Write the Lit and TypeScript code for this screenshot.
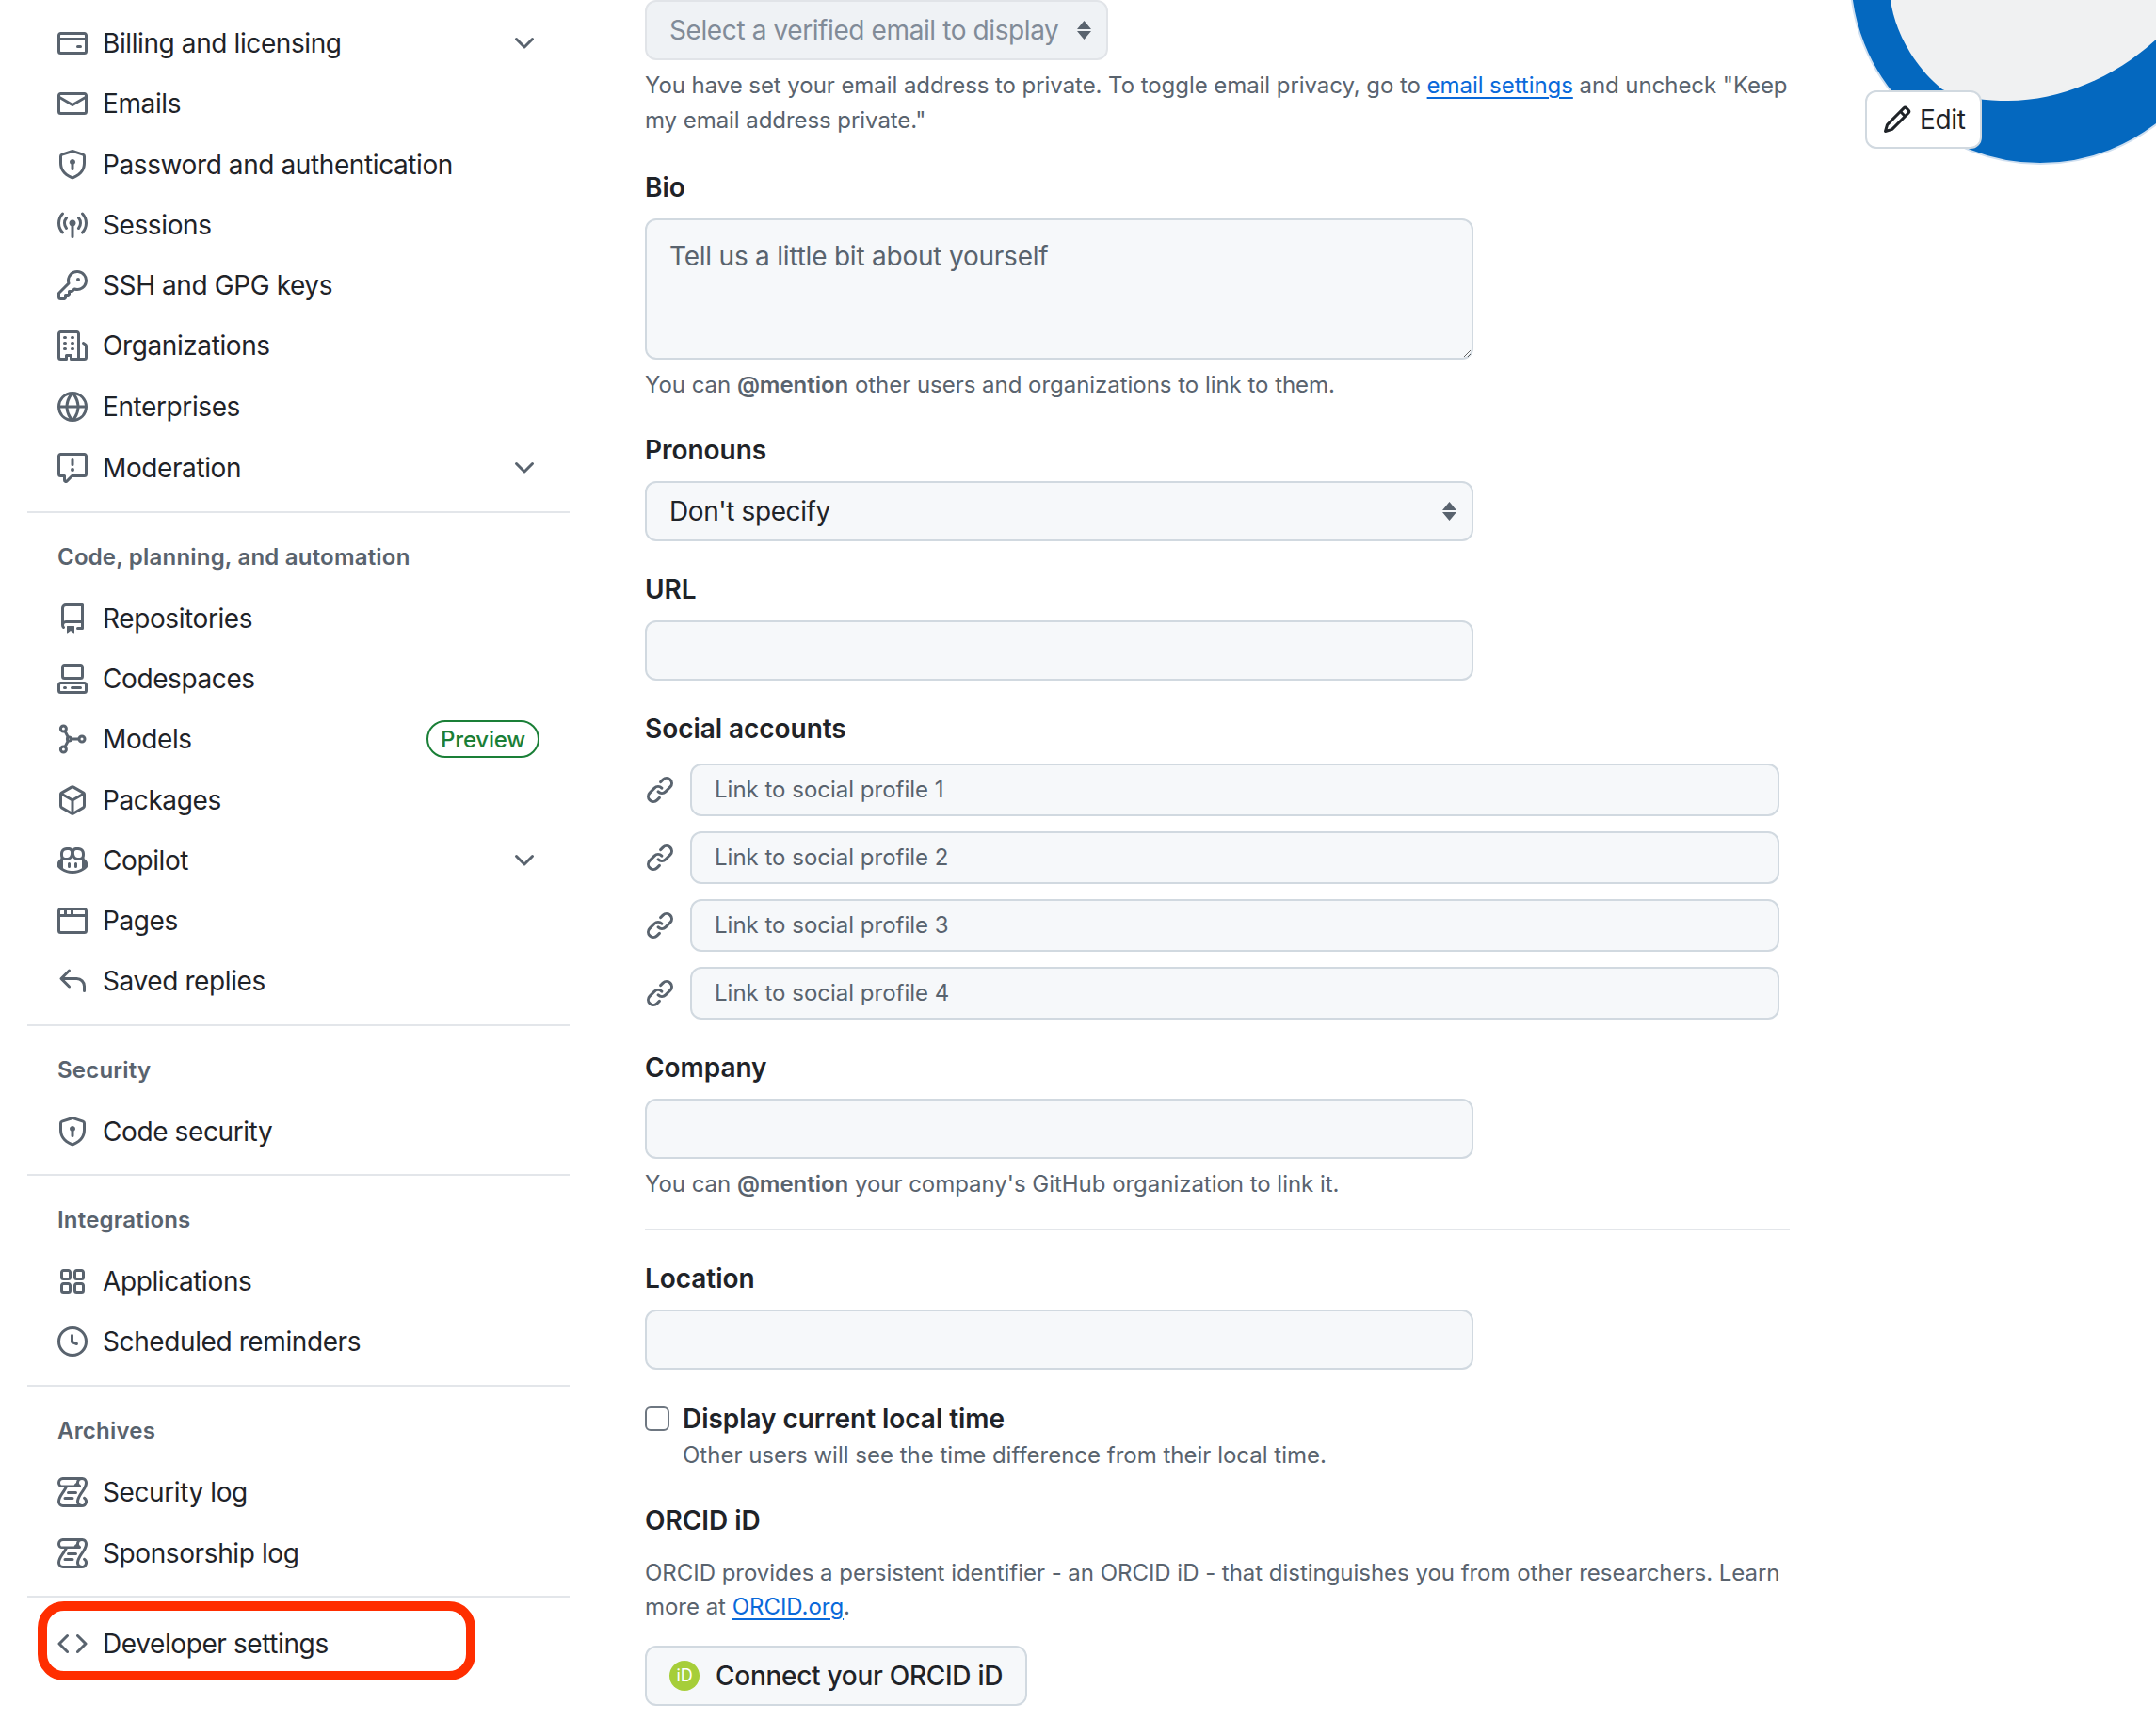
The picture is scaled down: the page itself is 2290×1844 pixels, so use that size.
import { html, LitElement, css } from 'lit';
import { customElement } from 'lit/decorators.js';

const icons: Record<string, string> = {
  card: 'M10.75 9a.75.75 0 0 0 0 1.5h1.5a.75.75 0 0 0 0-1.5h-1.5ZM0 3.75C0 2.784.784 2 1.75 2h12.5c.966 0 1.75.784 1.75 1.75v8.5A1.75 1.75 0 0 1 14.25 14H1.75A1.75 1.75 0 0 1 0 12.25ZM14.5 6.5h-13v5.75c0 .138.112.25.25.25h12.5a.25.25 0 0 0 .25-.25Zm0-2.75a.25.25 0 0 0-.25-.25H1.75a.25.25 0 0 0-.25.25V5h13Z',
  mail: 'M1.75 2h12.5c.966 0 1.75.784 1.75 1.75v8.5A1.75 1.75 0 0 1 14.25 14H1.75A1.75 1.75 0 0 1 0 12.25v-8.5C0 2.784.784 2 1.75 2ZM1.5 12.251c0 .138.112.25.25.25h12.5a.25.25 0 0 0 .25-.25V5.809L8.38 9.397a.75.75 0 0 1-.76 0L1.5 5.809v6.442Zm13-8.181v-.32a.25.25 0 0 0-.25-.25H1.75a.25.25 0 0 0-.25.25v.32L8 7.88Z',
  shield: 'm8.533.133 5.25 1.68A1.75 1.75 0 0 1 15 3.48V7c0 1.566-.32 3.182-1.303 4.682-.983 1.498-2.585 2.813-5.032 3.855a1.697 1.697 0 0 1-1.33 0c-2.447-1.042-4.049-2.357-5.032-3.855C1.32 10.182 1 8.566 1 7V3.48a1.75 1.75 0 0 1 1.217-1.667l5.25-1.68a1.748 1.748 0 0 1 1.066 0Zm-.61 1.429.001.001-5.25 1.68a.251.251 0 0 0-.174.237V7c0 1.36.275 2.666 1.057 3.859.784 1.194 2.121 2.342 4.366 3.298a.196.196 0 0 0 .154 0c2.245-.957 3.582-2.103 4.366-3.297C13.225 9.666 13.5 8.358 13.5 7V3.48a.25.25 0 0 0-.174-.238l-5.25-1.68a.25.25 0 0 0-.153 0ZM9.5 6.5c0 .536-.286 1.032-.75 1.3v2.45a.75.75 0 0 1-1.5 0V7.8A1.5 1.5 0 1 1 9.5 6.5Z',
  broadcast: 'M8.75 8.582v5.668a.75.75 0 0 1-1.5 0V8.582a1.75 1.75 0 1 1 1.5 0Zm3.983-7.125a.75.75 0 0 1 1.06.026A7.976 7.976 0 0 1 16 7c0 2.139-.84 4.083-2.207 5.517a.75.75 0 1 1-1.086-1.034A6.474 6.474 0 0 0 14.5 7a6.474 6.474 0 0 0-1.793-4.483.75.75 0 0 1 .026-1.06Zm-9.466 0a.75.75 0 0 1 .026 1.06A6.474 6.474 0 0 0 1.5 7a6.47 6.47 0 0 0 1.793 4.483.75.75 0 0 1-1.086 1.034A7.973 7.973 0 0 1 0 7c0-2.139.84-4.083 2.207-5.517a.75.75 0 0 1 1.06-.026Zm8.556 2.321A4.988 4.988 0 0 1 13 7a4.988 4.988 0 0 1-1.177 3.222.75.75 0 1 1-1.146-.967A3.487 3.487 0 0 0 11.5 7c0-.86-.309-1.645-.823-2.255a.75.75 0 0 1 1.146-.967Zm-6.492.958A3.48 3.48 0 0 0 4.5 7a3.48 3.48 0 0 0 .823 2.255.75.75 0 0 1-1.146.967A4.981 4.981 0 0 1 3 7a4.982 4.982 0 0 1 1.188-3.236.75.75 0 1 1 1.143.972Z',
  key: 'M10.5 0a5.499 5.499 0 1 1-1.288 10.848l-.932.932a.749.749 0 0 1-.53.22H7v.75a.749.749 0 0 1-.22.53l-.5.5a.749.749 0 0 1-.53.22H5v.75a.749.749 0 0 1-.22.53l-.5.5a.749.749 0 0 1-.53.22h-2A1.75 1.75 0 0 1 0 14.25v-2c0-.199.079-.389.22-.53l4.932-4.932A5.5 5.5 0 0 1 10.5 0Zm-4 5.5c-.001.431.069.86.205 1.269a.75.75 0 0 1-.181.768L1.5 12.56v1.69c0 .138.112.25.25.25h1.69l.06-.06v-1.19a.75.75 0 0 1 .75-.75h1.19l.06-.06v-1.19a.75.75 0 0 1 .75-.75h1.19l1.023-1.025a.75.75 0 0 1 .768-.18A4 4 0 1 0 6.5 5.5ZM11 6a1 1 0 1 1 0-2 1 1 0 0 1 0 2Z',
  org: 'M1.75 16A1.75 1.75 0 0 1 0 14.25V1.75C0 .784.784 0 1.75 0h8.5C11.216 0 12 .784 12 1.75v12.5c0 .085-.006.168-.018.25h2.268a.25.25 0 0 0 .25-.25V8.285a.25.25 0 0 0-.111-.208l-1.055-.703a.749.749 0 1 1 .832-1.248l1.055.703c.487.325.779.871.779 1.456v5.965A1.75 1.75 0 0 1 14.25 16h-3.5a.766.766 0 0 1-.197-.026c-.099.017-.2.026-.303.026h-3a.75.75 0 0 1-.75-.75V14h-1v1.25a.75.75 0 0 1-.75.75Zm-.25-1.75c0 .138.112.25.25.25H4v-1.25a.75.75 0 0 1 .75-.75h2.5a.75.75 0 0 1 .75.75v1.25h2.25a.25.25 0 0 0 .25-.25V1.75a.25.25 0 0 0-.25-.25h-8.5a.25.25 0 0 0-.25.25ZM3.75 6h.5a.75.75 0 0 1 0 1.5h-.5a.75.75 0 0 1 0-1.5ZM3 3.75A.75.75 0 0 1 3.75 3h.5a.75.75 0 0 1 0 1.5h-.5A.75.75 0 0 1 3 3.75Zm4 3A.75.75 0 0 1 7.75 6h.5a.75.75 0 0 1 0 1.5h-.5A.75.75 0 0 1 7 6.75ZM7.75 3h.5a.75.75 0 0 1 0 1.5h-.5a.75.75 0 0 1 0-1.5ZM3 9.75A.75.75 0 0 1 3.75 9h.5a.75.75 0 0 1 0 1.5h-.5A.75.75 0 0 1 3 9.75ZM7.75 9h.5a.75.75 0 0 1 0 1.5h-.5a.75.75 0 0 1 0-1.5Z',
  globe: 'M8 0a8 8 0 1 1 0 16A8 8 0 0 1 8 0ZM5.78 8.75a9.64 9.64 0 0 0 1.363 4.177c.255.426.542.832.857 1.215.245-.296.551-.705.857-1.215A9.64 9.64 0 0 0 10.22 8.75Zm4.44-1.5a9.64 9.64 0 0 0-1.363-4.177c-.307-.51-.612-.919-.857-1.215a9.927 9.927 0 0 0-.857 1.215A9.64 9.64 0 0 0 5.78 7.25Zm-5.944 1.5H1.543a6.507 6.507 0 0 0 4.666 5.5c-.123-.181-.24-.365-.352-.552-.715-1.192-1.437-2.874-1.581-4.948Zm-2.733-1.5h2.733c.144-2.074.866-3.756 1.58-4.948.12-.197.237-.381.353-.552a6.507 6.507 0 0 0-4.666 5.5Zm10.181 1.5c-.144 2.074-.866 3.756-1.58 4.948-.12.197-.237.381-.353.552a6.507 6.507 0 0 0 4.666-5.5Zm2.733-1.5a6.507 6.507 0 0 0-4.666-5.5c.123.181.24.365.353.552.714 1.192 1.436 2.874 1.58 4.948Z',
  report: 'M0 1.75C0 .784.784 0 1.75 0h12.5C15.216 0 16 .784 16 1.75v9.5A1.75 1.75 0 0 1 14.25 13H8.06l-2.573 2.573A1.458 1.458 0 0 1 3 14.543V13H1.75A1.75 1.75 0 0 1 0 11.25Zm1.75-.25a.25.25 0 0 0-.25.25v9.5c0 .138.112.25.25.25h2a.75.75 0 0 1 .75.75v2.19l2.72-2.72a.749.749 0 0 1 .53-.22h6.5a.25.25 0 0 0 .25-.25v-9.5a.25.25 0 0 0-.25-.25Zm7 2.25v2.5a.75.75 0 0 1-1.5 0v-2.5a.75.75 0 0 1 1.5 0ZM9 9a1 1 0 1 1-2 0 1 1 0 0 1 2 0Z',
  repo: 'M2 2.5A2.5 2.5 0 0 1 4.5 0h8.75a.75.75 0 0 1 .75.75v12.5a.75.75 0 0 1-.75.75h-2.5a.75.75 0 0 1 0-1.5h1.75v-2h-8a1 1 0 0 0-.714 1.7.75.75 0 1 1-1.072 1.05A2.495 2.495 0 0 1 2 11.5Zm10.5-1h-8a1 1 0 0 0-1 1v6.708A2.486 2.486 0 0 1 4.5 9h8ZM5 12.25a.25.25 0 0 1 .25-.25h3.5a.25.25 0 0 1 .25.25v3.25a.25.25 0 0 1-.4.2l-1.45-1.087a.249.249 0 0 0-.3 0L5.4 15.7a.25.25 0 0 1-.4-.2Z',
  codespaces: 'M0 11.25c0-.966.784-1.75 1.75-1.75h12.5c.966 0 1.75.784 1.75 1.75v3A1.75 1.75 0 0 1 14.25 16H1.75A1.75 1.75 0 0 1 0 14.25Zm2-9.5C2 .784 2.784 0 3.75 0h8.5C13.216 0 14 .784 14 1.75v5a1.75 1.75 0 0 1-1.75 1.75h-8.5A1.75 1.75 0 0 1 2 6.75Zm1.75-.25a.25.25 0 0 0-.25.25v5c0 .138.112.25.25.25h8.5a.25.25 0 0 0 .25-.25v-5a.25.25 0 0 0-.25-.25Zm-2 9.5a.25.25 0 0 0-.25.25v3c0 .138.112.25.25.25h12.5a.25.25 0 0 0 .25-.25v-3a.25.25 0 0 0-.25-.25ZM7 12.75a.75.75 0 0 1 .75-.75h4.5a.75.75 0 0 1 0 1.5h-4.5a.75.75 0 0 1-.75-.75Zm-4 0a.75.75 0 0 1 .75-.75h.5a.75.75 0 0 1 0 1.5h-.5a.75.75 0 0 1-.75-.75Z',
  package: 'm8.878.392 5.25 3.045c.54.314.872.89.872 1.514v6.098a1.75 1.75 0 0 1-.872 1.514l-5.25 3.045a1.75 1.75 0 0 1-1.756 0l-5.25-3.045A1.75 1.75 0 0 1 1 11.049V4.951c0-.624.332-1.201.872-1.514L7.122.392a1.75 1.75 0 0 1 1.756 0ZM7.875 1.69l-4.63 2.685L8 7.133l4.755-2.758-4.63-2.685a.248.248 0 0 0-.25 0ZM2.5 5.677v5.372c0 .09.047.171.125.216l4.625 2.683V8.432Zm6.25 8.271 4.625-2.683a.25.25 0 0 0 .125-.216V5.677L8.75 8.432Z',
  copilot: 'M7.998 15.035c-4.562 0-7.873-2.914-7.998-3.749V9.338c.085-.628.677-1.686 1.588-2.065.013-.07.024-.143.036-.218.029-.183.06-.384.126-.612-.201-.508-.254-1.084-.254-1.656 0-.87.128-1.769.693-2.484.579-.733 1.494-1.124 2.724-1.261 1.206-.134 2.262.034 2.944.765.05.053.096.108.139.165.044-.057.094-.112.143-.165.682-.731 1.738-.899 2.944-.765 1.23.137 2.145.528 2.724 1.261.566.715.693 1.614.693 2.484 0 .572-.053 1.148-.254 1.656.066.228.098.429.126.612.012.076.024.148.037.218.924.385 1.522 1.471 1.591 2.095v1.872c0 .766-3.351 3.795-8.002 3.795Zm0-1.485c2.28 0 4.584-1.11 5.002-1.433V7.862l-.023-.116c-.49.21-1.075.291-1.727.291-1.146 0-2.059-.327-2.71-.991A3.222 3.222 0 0 1 8 6.303a3.24 3.24 0 0 1-.544.743c-.65.664-1.563.991-2.71.991-.652 0-1.236-.081-1.727-.291l-.023.116v4.255c.419.323 2.722 1.433 5.002 1.433ZM6.762 2.83c-.193-.206-.637-.413-1.682-.297-1.019.113-1.479.404-1.713.7-.247.312-.369.789-.369 1.554 0 .793.129 1.171.308 1.371.162.181.519.379 1.442.379.853 0 1.339-.235 1.638-.54.315-.322.527-.827.617-1.553.117-.935-.037-1.395-.241-1.614Zm4.155-.297c-1.044-.116-1.488.091-1.681.297-.204.219-.359.679-.242 1.614.091.726.303 1.231.618 1.553.299.305.784.54 1.638.54.922 0 1.28-.198 1.442-.379.179-.2.308-.578.308-1.371 0-.765-.123-1.242-.37-1.554-.233-.296-.693-.587-1.713-.7ZM6.25 9.037a.75.75 0 0 1 .75.75v1.501a.75.75 0 0 1-1.5 0V9.787a.75.75 0 0 1 .75-.75Zm4.25.75v1.501a.75.75 0 0 1-1.5 0V9.787a.75.75 0 0 1 1.5 0Z',
  browser: 'M0 2.75C0 1.784.784 1 1.75 1h12.5c.966 0 1.75.784 1.75 1.75v10.5A1.75 1.75 0 0 1 14.25 15H1.75A1.75 1.75 0 0 1 0 13.25ZM14.5 6h-13v7.25c0 .138.112.25.25.25h12.5a.25.25 0 0 0 .25-.25Zm-6-3.5v2h6V2.75a.25.25 0 0 0-.25-.25ZM5 2.5v2h2v-2Zm-3.25 0a.25.25 0 0 0-.25.25V4.5h2v-2Z',
  reply: 'M6.78 1.97a.75.75 0 0 1 0 1.06L3.81 6h6.44A4.75 4.75 0 0 1 15 10.75v2.5a.75.75 0 0 1-1.5 0v-2.5a3.25 3.25 0 0 0-3.25-3.25H3.81l2.97 2.97a.749.749 0 0 1-.326 1.275.749.749 0 0 1-.734-.215L1.47 7.28a.75.75 0 0 1 0-1.06l4.25-4.25a.75.75 0 0 1 1.06 0Z',
  apps: 'M1.5 3.25c0-.966.784-1.75 1.75-1.75h2.5c.966 0 1.75.784 1.75 1.75v2.5A1.75 1.75 0 0 1 5.75 7.5h-2.5A1.75 1.75 0 0 1 1.5 5.75Zm7 0c0-.966.784-1.75 1.75-1.75h2.5c.966 0 1.75.784 1.75 1.75v2.5a1.75 1.75 0 0 1-1.75 1.75h-2.5A1.75 1.75 0 0 1 8.5 5.75Zm-7 7c0-.966.784-1.75 1.75-1.75h2.5c.966 0 1.75.784 1.75 1.75v2.5a1.75 1.75 0 0 1-1.75 1.75h-2.5a1.75 1.75 0 0 1-1.75-1.75Zm7 0c0-.966.784-1.75 1.75-1.75h2.5c.966 0 1.75.784 1.75 1.75v2.5a1.75 1.75 0 0 1-1.75 1.75h-2.5a1.75 1.75 0 0 1-1.75-1.75ZM3.25 3a.25.25 0 0 0-.25.25v2.5c0 .138.112.25.25.25h2.5A.25.25 0 0 0 6 5.75v-2.5A.25.25 0 0 0 5.75 3Zm7 0a.25.25 0 0 0-.25.25v2.5c0 .138.112.25.25.25h2.5a.25.25 0 0 0 .25-.25v-2.5a.25.25 0 0 0-.25-.25ZM3.25 10a.25.25 0 0 0-.25.25v2.5c0 .138.112.25.25.25h2.5a.25.25 0 0 0 .25-.25v-2.5a.25.25 0 0 0-.25-.25Zm7 0a.25.25 0 0 0-.25.25v2.5c0 .138.112.25.25.25h2.5a.25.25 0 0 0 .25-.25v-2.5a.25.25 0 0 0-.25-.25Z',
  clock: 'M8 0a8 8 0 1 1 0 16A8 8 0 0 1 8 0ZM1.5 8a6.5 6.5 0 1 0 13 0 6.5 6.5 0 0 0-13 0Zm7-3.25v2.992l2.028.812a.75.75 0 0 1-.557 1.392l-2.5-1A.751.751 0 0 1 7 8.25v-3.5a.75.75 0 0 1 1.5 0Z',
  log: 'M5 8.25a.75.75 0 0 1 .75-.75h4a.75.75 0 0 1 0 1.5h-4A.75.75 0 0 1 5 8.25ZM4 10.5A.75.75 0 0 0 4 12h4a.75.75 0 0 0 0-1.5H4ZM13-.005c1.654 0 3 1.328 3 3 0 .982-.338 1.933-.783 2.818-.443.879-1.028 1.758-1.582 2.588l-.011.017c-.568.853-1.104 1.659-1.501 2.446-.398.789-.623 1.494-.623 2.136a1.5 1.5 0 1 0 2.333-1.248.75.75 0 0 1 .834-1.246A3 3 0 0 1 13 16H3a3 3 0 0 1-3-3c0-1.582.891-3.135 1.777-4.506.209-.322.418-.637.623-.946.473-.709.923-1.386 1.287-2.048H2.51c-.576 0-1.381-.133-1.907-.783A2.68 2.68 0 0 1 0 2.995a3 3 0 0 1 3-3Zm0 1.5a1.5 1.5 0 0 0-1.5 1.5c0 .476.223.834.667 1.132A.75.75 0 0 1 11.75 5.5H5.368c-.467 1.003-1.141 2.015-1.773 2.963-.192.289-.381.571-.558.845C2.13 10.711 1.5 11.916 1.5 13A1.5 1.5 0 0 0 3 14.5h7.401A2.989 2.989 0 0 1 10 13c0-.979.338-1.928.784-2.812.441-.876 1.023-1.75 1.575-2.579l.017-.026c.568-.853 1.103-1.658 1.501-2.448.398-.79.623-1.497.623-2.14a1.5 1.5 0 0 0-1.5-1.5Zm-10 0a1.5 1.5 0 0 0-1.5 1.5c0 .326.087.715.27.98.108.156.385.269.74.269h6.31A2.9 2.9 0 0 1 10 3c0-.52.135-1.04.39-1.5Z',
  code: 'm11.28 3.22 4.25 4.25a.75.75 0 0 1 0 1.06l-4.25 4.25a.749.749 0 0 1-1.275-.326.749.749 0 0 1 .215-.734L13.94 8l-3.72-3.72a.749.749 0 0 1 .326-1.275.749.749 0 0 1 .734.215Zm-6.56 0a.751.751 0 0 1 1.042.018.751.751 0 0 1 .018 1.042L2.06 8l3.72 3.72a.749.749 0 0 1-.326 1.275.749.749 0 0 1-.734-.215L.47 8.53a.75.75 0 0 1 0-1.06Z',
  chevron: 'M12.78 5.22a.749.749 0 0 1 0 1.06l-4.25 4.25a.749.749 0 0 1-1.06 0L3.22 6.28a.749.749 0 1 1 1.06-1.06L8 8.939l3.72-3.719a.749.749 0 0 1 1.06 0Z',
  link: 'm7.775 3.275 1.25-1.25a3.5 3.5 0 1 1 4.95 4.95l-2.5 2.5a3.5 3.5 0 0 1-4.95 0 .751.751 0 0 1 .018-1.042.751.751 0 0 1 1.042-.018 1.998 1.998 0 0 0 2.83 0l2.5-2.5a2.002 2.002 0 0 0-2.83-2.83l-1.25 1.25a.751.751 0 0 1-1.042-.018.751.751 0 0 1-.018-1.042Zm-4.69 9.64a1.998 1.998 0 0 0 2.83 0l1.25-1.25a.751.751 0 0 1 1.042.018.751.751 0 0 1 .018 1.042l-1.25 1.25a3.5 3.5 0 1 1-4.95-4.95l2.5-2.5a3.5 3.5 0 0 1 4.95 0 .751.751 0 0 1-.018 1.042.751.751 0 0 1-1.042.018 1.998 1.998 0 0 0-2.83 0l-2.5 2.5a1.998 1.998 0 0 0 0 2.83Z',
  pencil: 'M11.013 1.427a1.75 1.75 0 0 1 2.474 0l1.086 1.086a1.75 1.75 0 0 1 0 2.474l-8.61 8.61c-.21.21-.47.364-.756.445l-3.251.93a.75.75 0 0 1-.927-.928l.929-3.25c.081-.286.235-.547.445-.758l8.61-8.61Zm.176 4.823L9.75 4.81l-6.286 6.287a.253.253 0 0 0-.064.108l-.558 1.953 1.953-.558a.253.253 0 0 0 .108-.064Zm1.238-3.763a.25.25 0 0 0-.354 0L10.811 3.75l1.439 1.44 1.263-1.263a.25.25 0 0 0 0-.354Z',
};

interface NavItem {
  label: string;
  icon: string;
  chevron?: boolean;
  badge?: string;
  nudge?: boolean;
}

interface NavSection {
  heading?: string;
  items: NavItem[];
}

const sections: NavSection[] = [
  {
    items: [
      { label: 'Billing and licensing', icon: 'card', chevron: true },
      { label: 'Emails', icon: 'mail' },
      { label: 'Password and authentication', icon: 'shield' },
      { label: 'Sessions', icon: 'broadcast' },
      { label: 'SSH and GPG keys', icon: 'key' },
      { label: 'Organizations', icon: 'org' },
      { label: 'Enterprises', icon: 'globe' },
      { label: 'Moderation', icon: 'report', chevron: true, nudge: true },
    ],
  },
  {
    heading: 'Code, planning, and automation',
    items: [
      { label: 'Repositories', icon: 'repo' },
      { label: 'Codespaces', icon: 'codespaces' },
      { label: 'Models', icon: 'models', badge: 'Preview' },
      { label: 'Packages', icon: 'package' },
      { label: 'Copilot', icon: 'copilot', chevron: true },
      { label: 'Pages', icon: 'browser' },
      { label: 'Saved replies', icon: 'reply' },
    ],
  },
  { heading: 'Security', items: [{ label: 'Code security', icon: 'shield' }] },
  {
    heading: 'Integrations',
    items: [
      { label: 'Applications', icon: 'apps' },
      { label: 'Scheduled reminders', icon: 'clock' },
    ],
  },
  {
    heading: 'Archives',
    items: [
      { label: 'Security log', icon: 'log' },
      { label: 'Sponsorship log', icon: 'log' },
    ],
  },
];

const renderIcon = (name: string) => {
  if (name === 'models') {
    return html`<svg class="icon" viewBox="0 0 16 16" fill="none" stroke="currentColor" stroke-width="1.5">
      <circle cx="3.2" cy="2.5" r="1.5"></circle>
      <circle cx="3.2" cy="13.5" r="1.5"></circle>
      <circle cx="13" cy="8" r="1.5"></circle>
      <circle cx="6.2" cy="8" r="1"></circle>
      <path d="M4 3.8 5.7 7.1M4 12.2 5.7 8.9M7.2 8h4.3"></path>
    </svg>`;
  }
  return html`<svg class="icon" viewBox="0 0 16 16" fill="currentColor"><path d=${icons[name]}></path></svg>`;
};

const selectArrows = html`<svg class="arrows" viewBox="0 0 15 20" fill="currentColor">
  <path d="M7.5 0 15 9H0ZM0 11h15l-7.5 9Z"></path>
</svg>`;

@customElement('app-root')
export class AppRoot extends LitElement {
  static styles = css`
    :host {
      display: block;
      width: 2290px;
      height: 1844px;
      overflow: hidden;
      background: #fff;
      color: #1f2328;
      font-family: Inter, "Noto Sans", sans-serif;
    }

    * {
      box-sizing: border-box;
    }

    .page {
      display: flex;
      align-items: flex-start;
    }

    /* sidebar */
    .sidebar {
      width: 576px;
      margin-left: 29px;
      margin-right: 80px;
      padding-top: 14px;
      flex: none;
    }

    .nav-section + .nav-section {
      margin-top: 13px;
      border-top: 2px solid #e3e6ea;
    }

    .nav-section:nth-child(2),
    .nav-section:nth-child(5) {
      margin-top: 14px;
    }

    .nav-heading {
      margin: 0;
      padding: 29px 32px 15px;
      font-size: 24px;
      line-height: 36px;
      font-weight: 600;
      color: #59636e;
      letter-spacing: 0.2px;
    }

    .nav-row {
      position: relative;
      display: flex;
      align-items: center;
      gap: 16px;
      height: 64.25px;
      padding: 0 32px;
      font-size: 28px;
      letter-spacing: -0.4px;
      white-space: nowrap;
    }

    .nav-row.nudge {
      margin-top: 0.75px;
    }

    .nav-row .label {
      flex: 1;
    }

    .icon {
      width: 32px;
      height: 32px;
      flex: none;
      color: #59636e;
    }

    .badge {
      height: 40px;
      padding: 0 13px;
      display: flex;
      align-items: center;
      border: 2px solid #1a7f37;
      border-radius: 20px;
      color: #1a7f37;
      font-size: 24px;
      font-weight: 500;
      letter-spacing: -0.2px;
    }

    .dev-row {
      margin-top: 17px;
    }

    .dev-section {
      margin-top: 13px;
      border-top: 2px solid #e3e6ea;
    }

    /* annotation drawn over the Developer settings row */
    .marker {
      position: absolute;
      left: 11px;
      top: -13px;
      width: 465px;
      height: 84px;
      border: 10px solid #ff2e00;
      border-radius: 28px;
      pointer-events: none;
    }

    /* form column */
    .form {
      width: 1216px;
      flex: none;
    }

    .field {
      margin-top: 31px;
    }

    .field.bio {
      margin-top: 33px;
    }

    .field.pronouns {
      margin-top: 30px;
    }

    .field-label {
      display: block;
      margin: 0 0 13px;
      font-size: 28px;
      line-height: 40px;
      font-weight: 600;
      letter-spacing: -0.05px;
    }

    .control {
      display: block;
      width: 880px;
      height: 64px;
      padding: 0 24px;
      border: 2px solid #d1d9e0;
      border-radius: 12px;
      background: #f6f8fa;
      color: #1f2328;
      font-family: inherit;
      font-size: 28px;
      letter-spacing: -0.4px;
      outline: none;
      appearance: none;
    }

    .control::placeholder {
      color: #59636e;
      opacity: 1;
    }

    textarea.control {
      height: 150px;
      padding-top: 18px;
      line-height: 40px;
      letter-spacing: -0.22px;
      resize: vertical;
    }

    .select-wrap {
      position: relative;
      width: 880px;
    }

    .select-wrap.disabled {
      width: 492px;
    }

    .select-wrap.disabled .control {
      width: 100%;
      color: #818b98;
      background: #eff2f5;
      border-color: #e1e4e8;
      opacity: 1;
    }

    .arrows {
      position: absolute;
      right: 18px;
      top: 22px;
      width: 15px;
      height: 20px;
      color: #59636e;
      pointer-events: none;
    }

    .note {
      margin: 9px 0 0;
      font-size: 24px;
      line-height: 36.5px;
      color: #59636e;
      letter-spacing: -0.03px;
    }

    .note.privacy {
      letter-spacing: -0.06px;
      white-space: nowrap;
    }

    .note strong {
      font-weight: 600;
    }

    .note a {
      color: #0969da;
      text-decoration: underline;
      text-underline-offset: 4px;
    }

    .socials {
      display: flex;
      flex-direction: column;
      gap: 16px;
      margin-top: 17px;
    }

    .social-row {
      display: flex;
      align-items: center;
      gap: 16px;
      width: 1205px;
    }

    .social-row .control {
      flex: 1;
      height: 56px;
      font-size: 24px;
      letter-spacing: 0;
    }

    .rule {
      height: 2px;
      margin: 29px 0 0;
      border: 0;
      background: #e3e6ea;
    }

    .check-row {
      display: flex;
      align-items: center;
      gap: 14px;
      margin-top: 32px;
      font-size: 28px;
      line-height: 40px;
      font-weight: 600;
      letter-spacing: -0.05px;
    }

    .checkbox {
      width: 26px;
      height: 26px;
      margin: 0;
      border: 2px solid #6e7781;
      border-radius: 6px;
      background: #fff;
      appearance: none;
    }

    .check-note {
      margin: 1px 0 0 40px;
      letter-spacing: 0;
    }

    .orcid {
      margin-top: 30px;
    }

    .orcid .field-label {
      margin-bottom: 18px;
    }

    .orcid .note {
      margin-top: 0;
      line-height: 36px;
      white-space: nowrap;
    }

    .orcid-button {
      display: inline-flex;
      align-items: center;
      gap: 17px;
      height: 64px;
      margin-top: 23px;
      padding: 0 24px;
      border: 2px solid #d1d9e0;
      border-radius: 12px;
      background: #f6f8fa;
      color: #1f2328;
      font-family: inherit;
      font-size: 28px;
      font-weight: 500;
      letter-spacing: -0.28px;
    }

    .orcid-logo {
      width: 32px;
      height: 32px;
      flex: none;
      display: flex;
      align-items: center;
      justify-content: center;
      border-radius: 50%;
      background: #a6ce39;
      color: #fff;
      font-size: 18px;
      font-weight: 400;
    }

    /* avatar column, cut off by the top and right of the page */
    .avatar-col {
      position: relative;
      width: 328px;
      margin-left: 61px;
      flex: none;
    }

    .avatar {
      display: block;
      width: 328px;
      height: 180px;
    }

    .edit {
      position: absolute;
      left: 19px;
      top: 96px;
      display: flex;
      align-items: center;
      gap: 8px;
      height: 62px;
      padding: 0 15px 0 16px;
      border: 2px solid #d1d9e0;
      border-radius: 12px;
      background: #fff;
      color: #1f2328;
      font-family: inherit;
      font-size: 28px;
      font-weight: 400;
      letter-spacing: -0.3px;
    }

    .edit .icon {
      color: #1f2328;
    }
  `;

  renderRow(item: NavItem) {
    return html`
      <div class="nav-row ${item.nudge ? 'nudge' : ''}">
        ${renderIcon(item.icon)}
        <span class="label">${item.label}</span>
        ${item.badge ? html`<span class="badge">${item.badge}</span>` : ''}
        ${item.chevron ? renderIcon('chevron') : ''}
      </div>
    `;
  }

  renderSidebar() {
    return html`
      <nav class="sidebar">
        ${sections.map((section) => html`
          <div class="nav-section">
            ${section.heading ? html`<h2 class="nav-heading">${section.heading}</h2>` : ''}
            ${section.items.map((item) => this.renderRow(item))}
          </div>
        `)}
        <div class="dev-section">
          <div class="nav-row dev-row">
            ${renderIcon('code')}
            <span class="label">Developer settings</span>
            <span class="marker"></span>
          </div>
        </div>
      </nav>
    `;
  }

  render() {
    return html`
      <div class="page">
        ${this.renderSidebar()}

        <main class="form">
          <div class="select-wrap disabled">
            <select class="control" disabled>
              <option>Select a verified email to display</option>
            </select>
            ${selectArrows}
          </div>
          <p class="note privacy">
            You have set your email address to private. To toggle email privacy, go to
            <a href="#">email settings</a> and uncheck "Keep<br />my email address private."
          </p>

          <div class="field bio">
            <label class="field-label">Bio</label>
            <textarea class="control" placeholder="Tell us a little bit about yourself"></textarea>
            <p class="note">You can <strong>@mention</strong> other users and organizations to link to them.</p>
          </div>

          <div class="field pronouns">
            <label class="field-label">Pronouns</label>
            <div class="select-wrap">
              <select class="control"><option>Don't specify</option></select>
              ${selectArrows}
            </div>
          </div>

          <div class="field">
            <label class="field-label">URL</label>
            <input class="control" type="text" />
          </div>

          <div class="field">
            <h2 class="field-label">Social accounts</h2>
            <div class="socials">
              ${[1, 2, 3, 4].map((n) => html`
                <div class="social-row">
                  ${renderIcon('link')}
                  <input class="control" type="text" placeholder="Link to social profile ${n}" />
                </div>
              `)}
            </div>
          </div>

          <div class="field">
            <label class="field-label">Company</label>
            <input class="control" type="text" />
            <p class="note">You can <strong>@mention</strong> your company's GitHub organization to link it.</p>
          </div>

          <hr class="rule" />

          <div class="field">
            <label class="field-label">Location</label>
            <input class="control" type="text" />
          </div>

          <label class="check-row">
            <input class="checkbox" type="checkbox" />
            Display current local time
          </label>
          <p class="note check-note">Other users will see the time difference from their local time.</p>

          <div class="orcid">
            <h2 class="field-label">ORCID iD</h2>
            <p class="note">
              ORCID provides a persistent identifier - an ORCID iD - that distinguishes you from other researchers. Learn<br />more at <a href="#">ORCID.org</a>.
            </p>
            <button class="orcid-button" type="button">
              <span class="orcid-logo">iD</span>
              Connect your ORCID iD
            </button>
          </div>
        </main>

        <aside class="avatar-col">
          <svg class="avatar" viewBox="1962 0 328 180">
            <circle cx="2167" cy="-28" r="202" fill="#0468bf" stroke="#cfdff0" stroke-width="2"></circle>
            <path d="M2008 0C2012 30 2030 68 2063 95C2085 105 2110 107 2133 107C2190 107 2250 80 2292 40V0Z" fill="#f0f1f2"></path>
          </svg>
          <button class="edit" type="button">
            <svg class="icon" viewBox="0 0 16 16" fill="currentColor"><path d=${icons.pencil}></path></svg>
            Edit
          </button>
        </aside>
      </div>
    `;
  }
}

declare global {
  interface HTMLElementTagNameMap {
    'app-root': AppRoot,
  }
}
